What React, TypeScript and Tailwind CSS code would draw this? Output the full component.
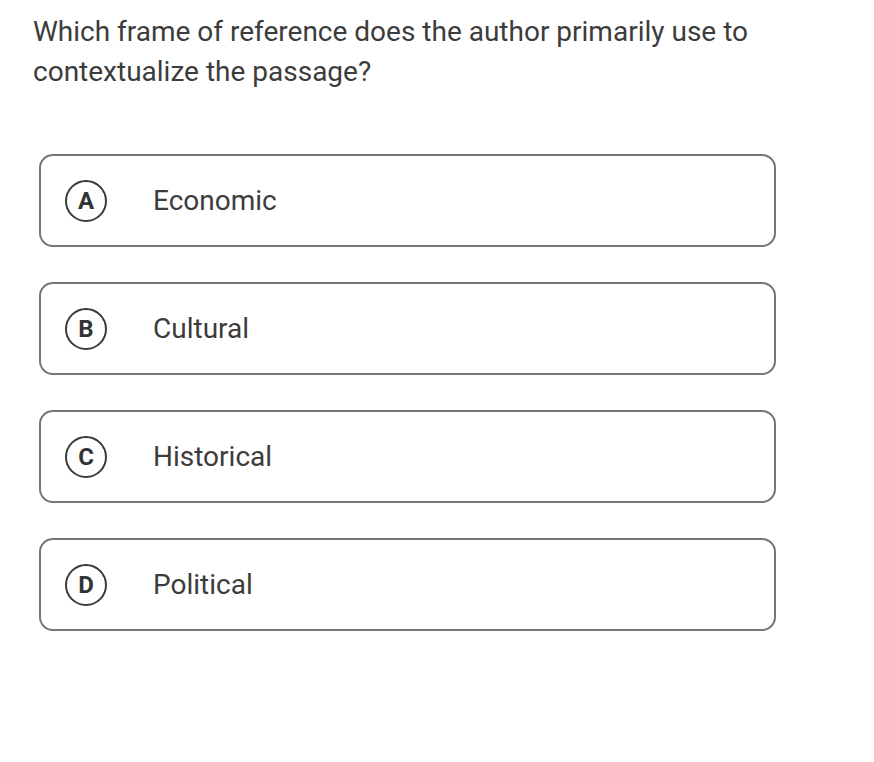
import React from "react";

const options = [
  { letter: "A", text: "Economic" },
  { letter: "B", text: "Cultural" },
  { letter: "C", text: "Historical" },
  { letter: "D", text: "Political" },
];

export default function App() {
  return (
    <div
      className="w-[874px] h-[762px] bg-white text-[#3a3a3a]"
      style={{ fontFamily: "Roboto, 'Noto Sans', sans-serif" }}
    >
      <div className="pl-[33px] pr-[100px] pt-[12px] text-[28px] leading-[40px] text-[#3c3c3c]">
        Which frame of reference does the author primarily use to contextualize the passage?
      </div>
      <div className="mt-[62px] ml-[39px] w-[737px] flex flex-col gap-[35px]">
        {options.map((o) => (
          <div
            key={o.letter}
            className="h-[93px] rounded-[14px] border-2 border-[#767676] flex items-center pl-[24px]"
          >
            <div className="w-[42px] h-[42px] rounded-full border-[2.5px] border-[#3a3a3a] flex items-center justify-center text-[24px] font-bold text-[#333]">
              {o.letter}
            </div>
            <div className="ml-[46px] text-[28px] text-[#3c3c3c]">{o.text}</div>
          </div>
        ))}
      </div>
    </div>
  );
}
